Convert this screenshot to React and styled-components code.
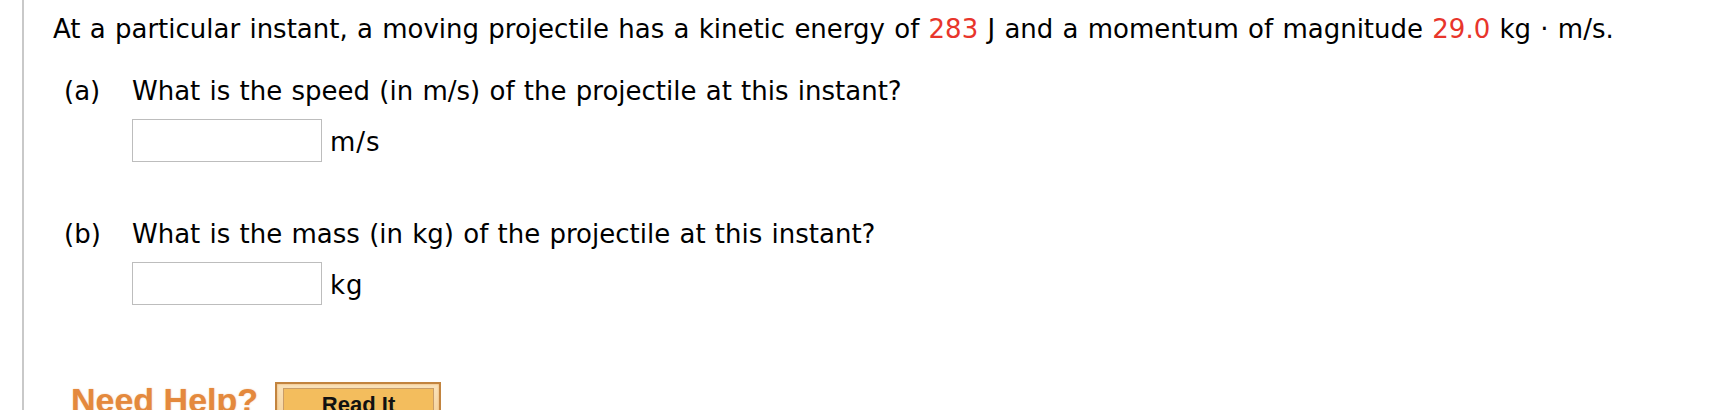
import React from "react";
import styled, { createGlobalStyle } from "styled-components";

const GlobalStyle = createGlobalStyle`
  html, body {
    margin: 0;
    padding: 0;
    background: #ffffff;
  }
`;

const Page = styled.div`
  margin-left: 22px;
  min-height: 410px;
  box-sizing: border-box;
  border-left: 2px solid #c9c9c9;
  padding: 14px 0 0 29px;
  font-family: "DejaVu Sans", Verdana, sans-serif;
  font-size: 26px;
  line-height: 30px;
  word-spacing: 1px;
  color: #000000;
`;

const Prompt = styled.p`
  margin: 0;
  white-space: nowrap;
`;

const Given = styled.span`
  color: #e8352b;
`;

const Part = styled.div`
  display: grid;
  grid-template-columns: 68px auto;
  padding-left: 11px;
  margin-top: ${(p) => p.$gap}px;
`;

const Label = styled.div`
  white-space: nowrap;
`;

const PartBody = styled.div`
  display: flex;
  flex-direction: column;
`;

const AnswerRow = styled.div`
  display: flex;
  align-items: center;
  gap: 8px;
  margin-top: 13px;
`;

const AnswerInput = styled.input`
  box-sizing: border-box;
  width: 190px;
  height: 43px;
  margin: 0;
  padding: 0 6px;
  border: 1px solid #bdbdbd;
  border-radius: 0;
  background: #ffffff;
  font: inherit;
  outline: none;
`;

const Unit = styled.span`
  line-height: 30px;
  padding-top: 2px;
  letter-spacing: 1px;
`;

const HelpRow = styled.div`
  display: flex;
  align-items: flex-start;
  gap: 17px;
  margin-top: 77px;
  padding-left: 18px;
`;

const HelpText = styled.span`
  font-family: "Liberation Sans", Arial, sans-serif;
  font-weight: bold;
  font-size: 34px;
  line-height: 37px;
  word-spacing: 0;
  color: #e4893d;
  text-shadow: 0 0 1.5px rgba(228, 137, 61, 0.55);
`;

const ReadItButton = styled.button`
  box-sizing: border-box;
  width: 166px;
  height: 46px;
  margin: 0;
  padding: 4px 5px 4px 6px;
  border: 2px solid #c2843f;
  border-radius: 0;
  background: linear-gradient(#f9e2bb, #f5cf92);
  box-shadow: inset 0 0 2px #e9a150;
  cursor: pointer;
  display: flex;
`;

const ReadItFace = styled.span`
  flex: 1;
  box-sizing: border-box;
  border: 1px solid #c99d68;
  background: #f3bd5d;
  padding-top: 3px;
  font-family: "Liberation Sans", Arial, sans-serif;
  font-weight: bold;
  font-size: 22px;
  line-height: 26px;
  color: #111111;
  text-align: center;
  word-spacing: 0;
`;

export default function App() {
  return (
    <>
      <GlobalStyle />
      <Page>
        <Prompt>
          At a particular instant, a moving projectile has a kinetic energy of{" "}
          <Given>283</Given> J and a momentum of magnitude <Given>29.0</Given>{" "}
          kg · m/s.
        </Prompt>

        <Part $gap={32}>
          <Label>(a)</Label>
          <PartBody>
            <span>What is the speed (in m/s) of the projectile at this instant?</span>
            <AnswerRow>
              <AnswerInput type="text" aria-label="speed" />
              <Unit>m/s</Unit>
            </AnswerRow>
          </PartBody>
        </Part>

        <Part $gap={57}>
          <Label>(b)</Label>
          <PartBody>
            <span>What is the mass (in kg) of the projectile at this instant?</span>
            <AnswerRow>
              <AnswerInput type="text" aria-label="mass" />
              <Unit>kg</Unit>
            </AnswerRow>
          </PartBody>
        </Part>

        <HelpRow>
          <HelpText>Need Help?</HelpText>
          <ReadItButton type="button">
            <ReadItFace>Read It</ReadItFace>
          </ReadItButton>
        </HelpRow>
      </Page>
    </>
  );
}
